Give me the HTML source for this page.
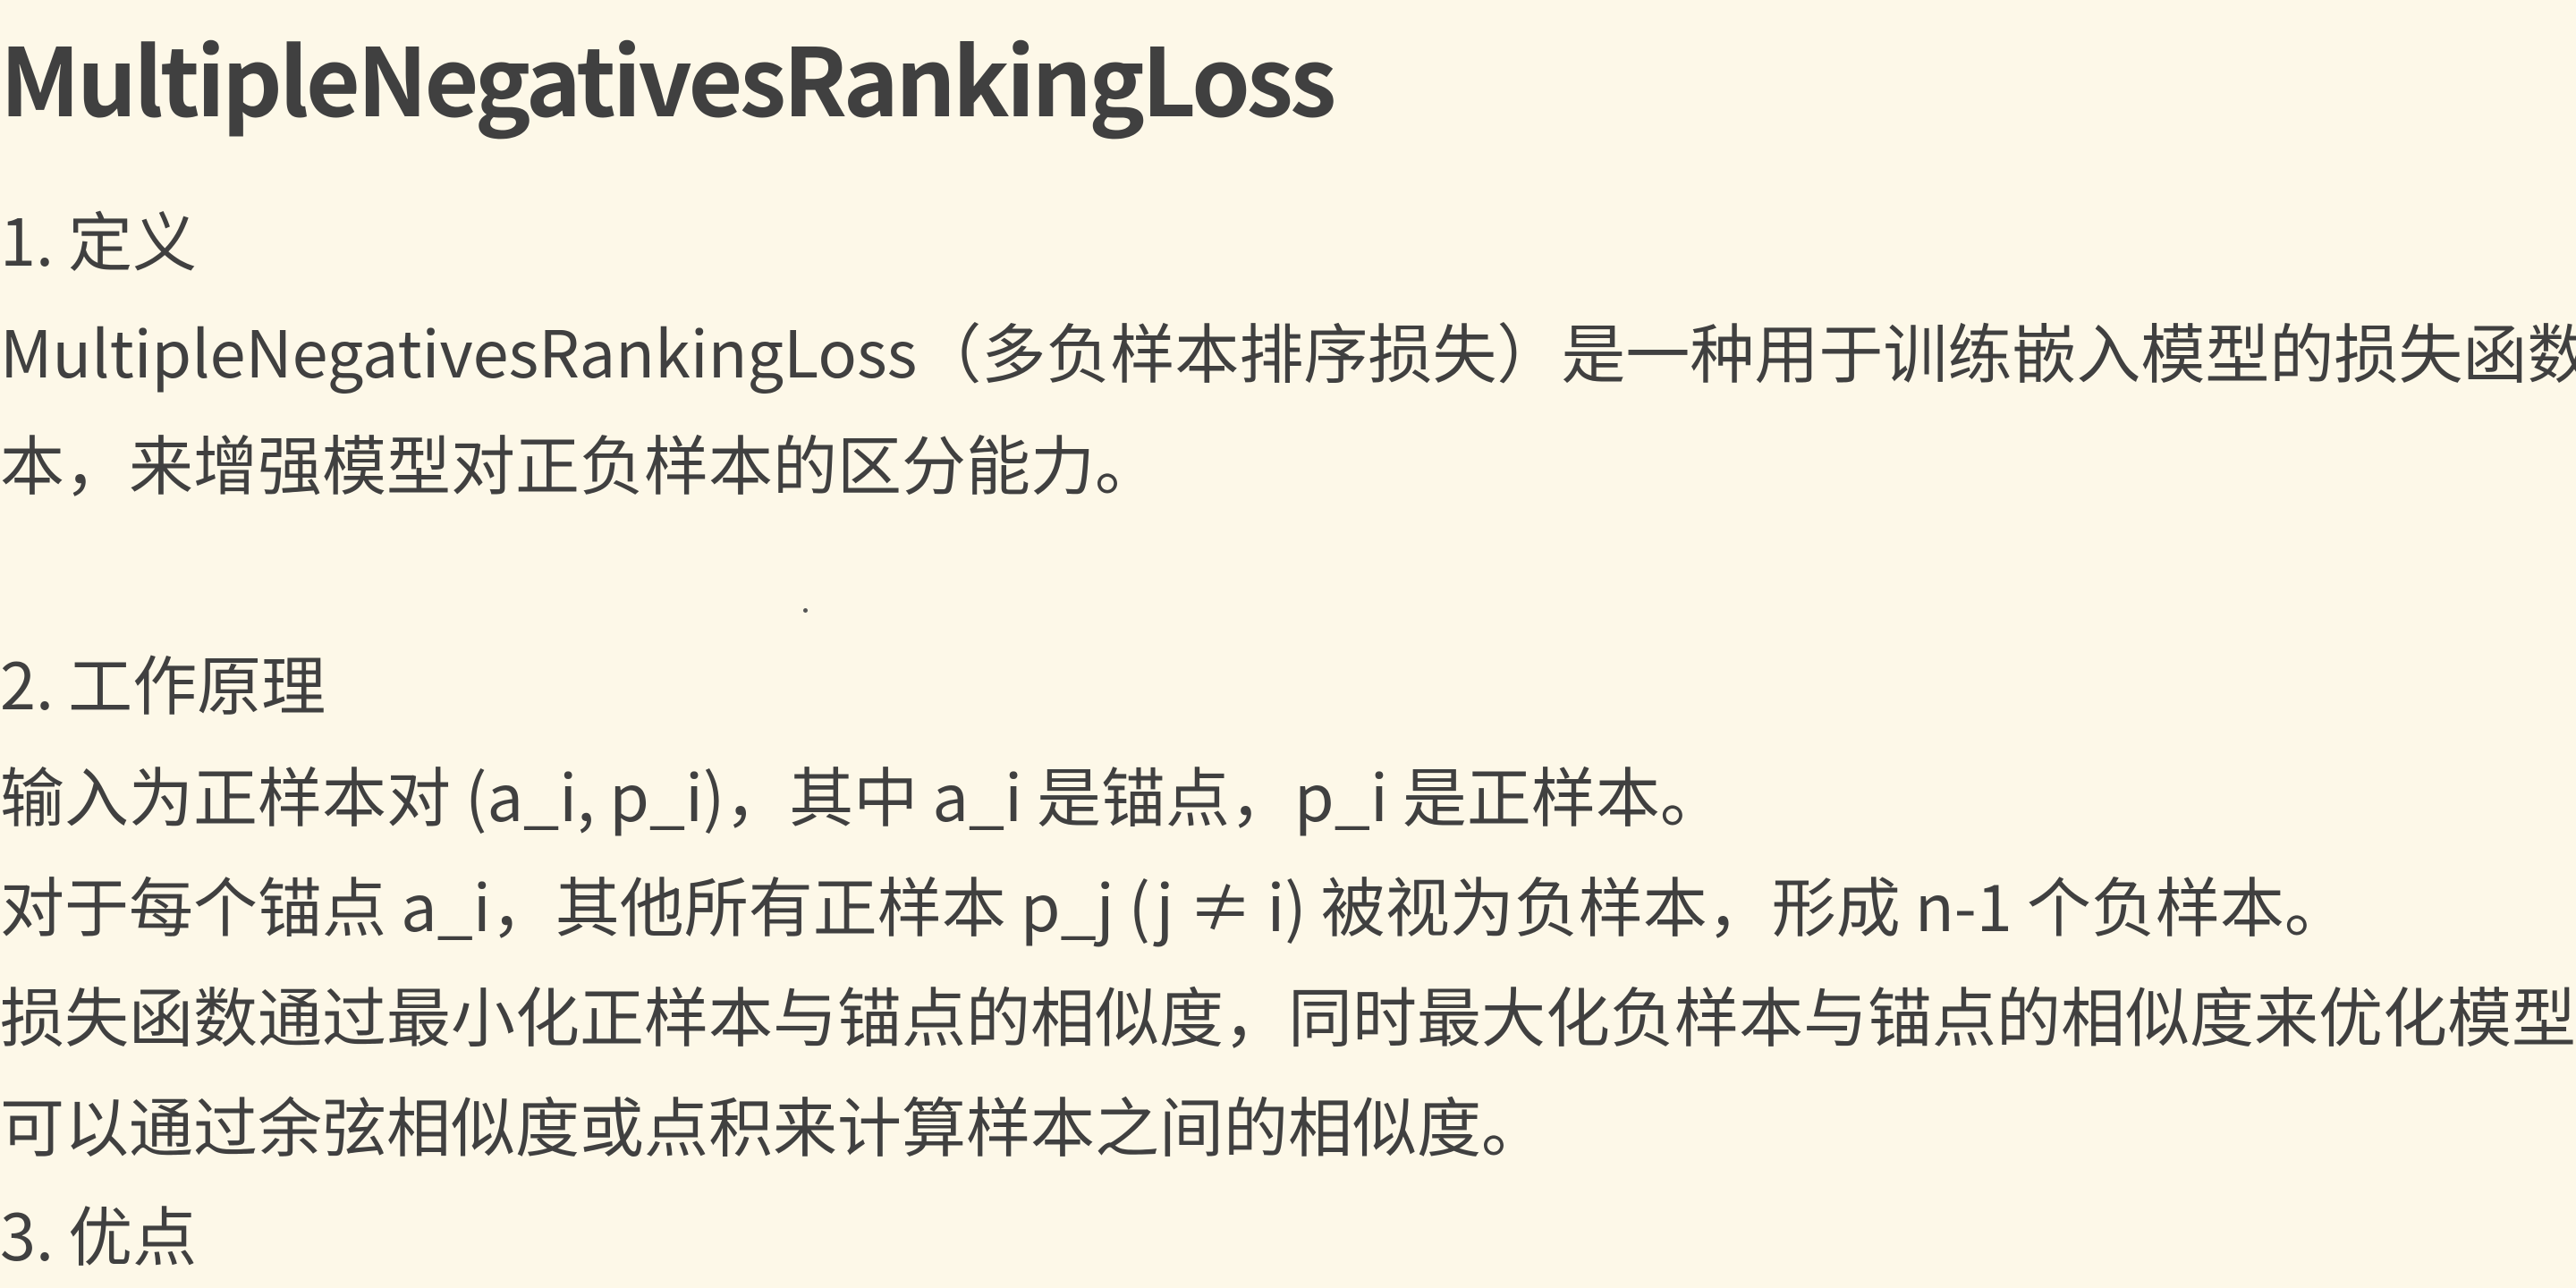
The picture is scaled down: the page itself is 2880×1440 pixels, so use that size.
<!DOCTYPE html>
<html><head><meta charset="utf-8"><style>
html,body{margin:0;padding:0}
body{width:2880px;height:1440px;overflow:hidden;background:#fdf8e8;color:#404040;font-family:"Noto Sans CJK SC","Liberation Sans",sans-serif;position:relative}
.l{position:absolute;left:0;width:2880px;overflow:hidden;white-space:nowrap;font-size:72px;line-height:124px;height:124px}
.t{position:absolute;left:0;top:20px;white-space:nowrap;font-size:105px;font-weight:bold;line-height:130px;letter-spacing:-3.5px}
.dot{position:absolute;left:898px;top:680px;width:5px;height:5px;background:#555;border-radius:50%}
</style></head><body>
<div class="t">MultipleNegativesRankingLoss</div>
<div class="l" style="top:204px">1. 定义</div>
<div class="l" style="top:329px">MultipleNegativesRankingLoss（多负样本排序损失）是一种用于训练嵌入模型的损失函数，通过对比正样本和负样</div>
<div class="l" style="top:454px">本，来增强模型对正负样本的区分能力。</div>
<div class="dot"></div>
<div class="l" style="top:700px">2. 工作原理</div>
<div class="l" style="top:825px">输入为正样本对 (a_i, p_i)，其中 a_i 是锚点，p_i 是正样本。</div>
<div class="l" style="top:948px">对于每个锚点 a_i，其他所有正样本 p_j (j ≠ i) 被视为负样本，形成 n-1 个负样本。</div>
<div class="l" style="top:1071px">损失函数通过最小化正样本与锚点的相似度，同时最大化负样本与锚点的相似度来优化模型。</div>
<div class="l" style="top:1194px">可以通过余弦相似度或点积来计算样本之间的相似度。</div>
<div class="l" style="top:1316px">3. 优点</div>
</body></html>
